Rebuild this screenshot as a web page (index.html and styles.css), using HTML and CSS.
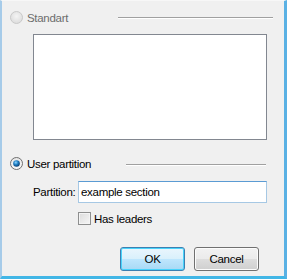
FILE: index.html
```html
<!DOCTYPE html>
<html lang="en">
<head>
  <meta charset="UTF-8">
  <title>Partition</title>
  <link rel="stylesheet" href="styles.css">
</head>
<body>
  <div class="dialog">
    <!-- standart option, disabled -->
    <div class="option option-standart">
      <svg class="radio" width="13" height="13" viewBox="0 0 13 13">
        <defs>
          <radialGradient id="rg-off" cx="50%" cy="40%" r="60%">
            <stop offset="0" stop-color="#f4f4f4"/>
            <stop offset="1" stop-color="#dcdcdc"/>
          </radialGradient>
        </defs>
        <circle cx="6.5" cy="6.5" r="6" fill="url(#rg-off)" stroke="#c9c9c9"/>
      </svg>
      <span class="option-label disabled">Standart</span>
      <span class="rule rule-standart"></span>
    </div>

    <div class="listbox"></div>

    <!-- user partition option -->
    <div class="option option-user">
      <svg class="radio" width="13" height="13" viewBox="0 0 13 13">
        <defs>
          <radialGradient id="rg-on" cx="40%" cy="35%" r="65%">
            <stop offset="0" stop-color="#8fd6ff"/>
            <stop offset="0.5" stop-color="#1f7fc4"/>
            <stop offset="1" stop-color="#0b3f73"/>
          </radialGradient>
          <linearGradient id="rg-ring" x1="0" y1="0" x2="0" y2="1">
            <stop offset="0" stop-color="#e6e6e6"/>
            <stop offset="1" stop-color="#fafafa"/>
          </linearGradient>
        </defs>
        <circle cx="6.5" cy="6.5" r="6" fill="url(#rg-ring)" stroke="#6f6f6f"/>
        <circle cx="6.5" cy="6.5" r="3.3" fill="url(#rg-on)"/>
      </svg>
      <span class="option-label">User partition</span>
      <span class="rule rule-user"></span>
    </div>

    <div class="field">
      <label class="field-label" for="partition">Partition:</label>
      <input id="partition" class="textbox" type="text" value="example section">
    </div>

    <div class="check">
      <span class="checkbox"></span>
      <span class="check-label">Has leaders</span>
    </div>

    <div class="buttons">
      <button class="btn btn-default">OK</button>
      <button class="btn">Cancel</button>
    </div>
  </div>
</body>
</html>
```

FILE: styles.css
```css
body {
  margin: 0;
  padding: 0;
  overflow: hidden;
  background: #f0f0f0;
  font-family: "Liberation Sans", Arial, sans-serif;
  font-size: 11.5px;
  letter-spacing: -0.3px;
  color: #000;
}

.dialog {
  width: 287px;
  height: 279px;
  box-sizing: border-box;
  background: #f0f0f0;
  border-left: 2px solid #a6cbe9;
  border-right: 3px solid #5ab1e4;
  border-bottom: 3px solid #41b6e6;
  border-top: 1px solid #f7f7f7;
  position: relative;
}

.option {
  display: flex;
  align-items: center;
  height: 13px;
  padding-left: 8px;
}

.option-standart {
  margin-top: 10px;
}

.option-user {
  margin-top: 17px;
}

.radio {
  display: block;
  flex: none;
}

.option-label {
  margin-left: 4px;
  white-space: nowrap;
}

.option-label.disabled {
  color: #6d6d6d;
}

.rule {
  height: 1px;
  background: #a0a0a0;
  border-bottom: 1px solid #ffffff;
}

.rule-standart {
  margin-left: 50px;
  width: 155px;
}

.rule-user {
  margin-left: 35px;
  width: 140px;
  margin-top: 3px;
}

.listbox {
  margin: 10px 0 0 31px;
  width: 234px;
  height: 106px;
  box-sizing: border-box;
  background: #fff;
  border: 1px solid #828790;
}

.field {
  display: flex;
  align-items: center;
  margin-top: 11px;
  padding-left: 31px;
}

.field-label {
  width: 45px;
}

.textbox {
  width: 189px;
  height: 22px;
  box-sizing: border-box;
  margin: 0;
  padding: 0 2px;
  border: 1px solid #a6c8e4;
  border-top-color: #5b9bd3;
  background: #fff;
  font-family: inherit;
  font-size: 11.5px;
  letter-spacing: -0.3px;
  outline: none;
}

.check {
  display: flex;
  align-items: center;
  margin-top: 9px;
  padding-left: 76px;
}

.checkbox {
  width: 13px;
  height: 13px;
  box-sizing: border-box;
  border: 1px solid #8e8f8f;
  background: linear-gradient(135deg, #dcdcdc, #f6f6f6);
  box-shadow: inset 0 0 0 1px #f4f4f4;
}

.check-label {
  margin-left: 3px;
}

.buttons {
  display: flex;
  justify-content: flex-end;
  gap: 9px;
  margin-top: 22px;
  padding-right: 25px;
}

.btn {
  width: 65px;
  height: 24px;
  margin: 0;
  padding: 0;
  box-sizing: border-box;
  border: 1px solid #707070;
  border-radius: 3px;
  background: linear-gradient(to bottom, #f2f2f2 0%, #ebebeb 50%, #dddddd 51%, #cfcfcf 100%);
  box-shadow: inset 0 0 0 1px #fcfcfc;
  font-family: inherit;
  font-size: 11.5px;
  letter-spacing: -0.3px;
  color: #000;
}

.btn-default {
  border-color: #3c7fb1;
  background: linear-gradient(to bottom, #eaf6fd 0%, #d9f0fc 50%, #bee6fd 51%, #a7d9f5 100%);
  box-shadow: inset 0 0 0 1px #48d3fb;
}
```
